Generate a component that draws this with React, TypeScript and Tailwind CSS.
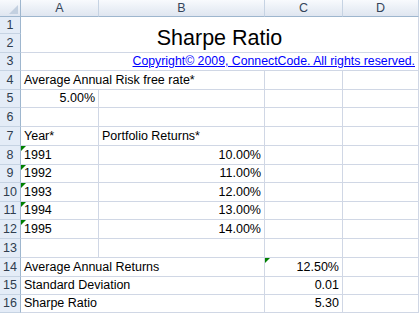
import React from 'react';

const FONT = { fontFamily: '"Liberation Sans", Arial, sans-serif' };

const ROWS = [17, 19, 18, 19, 18, 19, 19, 19, 18, 19, 18, 19, 19, 19, 18, 18];

const cell = 'border-r border-b border-[#d0d7e5] flex items-end px-[3px] pb-[1px] text-[12.5px] leading-[15px] text-black whitespace-nowrap overflow-hidden';

const Flag = () => (
  <span className="absolute left-0 top-0 w-0 h-0 border-t-[5px] border-r-[5px] border-t-[#008000] border-r-transparent" />
);

const RowHead = ({ n }: { n: number }) => (
  <div className="bg-[#e4ecf7] border-r border-[#9eb6ce] border-b border-b-[#c6d3e3] flex items-center justify-center text-[12.5px] leading-[15px] text-[#2f3d4f]">
    {n}
  </div>
);

const ColHead = ({ label }: { label: string }) => (
  <div className="bg-gradient-to-b from-[#f8fafd] to-[#dfe6f0] border-r border-r-[#c6d3e3] border-b border-b-[#9eb6ce] flex items-center justify-center text-[12.5px] text-[#34445a]">
    {label}
  </div>
);

const YEARS = [
  ['1991', '10.00%'],
  ['1992', '11.00%'],
  ['1993', '12.00%'],
  ['1994', '13.00%'],
  ['1995', '14.00%'],
];

export default function App() {
  return (
    <div className="w-[420px] h-[314px] bg-white overflow-hidden" style={FONT}>
      <div
        className="grid grid-cols-[21px_78px_166px_78px_76px]"
        style={{ gridTemplateRows: `17px ${ROWS.map(r => r + 'px').join(' ')}` }}
      >
        {/* corner */}
        <div className="relative bg-gradient-to-b from-[#f8fafd] to-[#dfe6f0] border-r border-b border-[#9eb6ce]">
          <svg className="absolute right-[2px] bottom-[2px]" width="9" height="9" viewBox="0 0 9 9">
            <polygon points="9,0 9,9 0,9" fill="#c3d0e0" />
          </svg>
        </div>
        <ColHead label="A" />
        <ColHead label="B" />
        <ColHead label="C" />
        <ColHead label="D" />

        {/* 1-2 title */}
        <RowHead n={1} />
        <div className="col-span-4 row-span-2 border-r border-b border-[#d0d7e5] flex items-end justify-center pb-[1px]">
          <span className="text-[21.5px] leading-[26px] text-black">Sharpe Ratio</span>
        </div>
        <RowHead n={2} />

        {/* 3 */}
        <RowHead n={3} />
        <div className={`${cell} col-span-4 justify-end`}>
          <span className="text-[#0000ff] underline text-[12.3px]">Copyright© 2009, ConnectCode. All rights reserved.</span>
        </div>

        {/* 4 */}
        <RowHead n={4} />
        <div className={`${cell} col-span-2`}>Average Annual Risk free rate*</div>
        <div className={cell} />
        <div className={cell} />

        {/* 5 */}
        <RowHead n={5} />
        <div className={`${cell} justify-end`}>5.00%</div>
        <div className={cell} />
        <div className={cell} />
        <div className={cell} />

        {/* 6 */}
        <RowHead n={6} />
        <div className={cell} />
        <div className={cell} />
        <div className={cell} />
        <div className={cell} />

        {/* 7 */}
        <RowHead n={7} />
        <div className={cell}>Year*</div>
        <div className={cell}>Portfolio Returns*</div>
        <div className={cell} />
        <div className={cell} />

        {YEARS.map(([y, v], i) => (
          <React.Fragment key={y}>
            <RowHead n={8 + i} />
            <div className={`${cell} relative`}>
              <Flag />
              {y}
            </div>
            <div className={`${cell} justify-end`}>{v}</div>
            <div className={cell} />
            <div className={cell} />
          </React.Fragment>
        ))}

        {/* 13 */}
        <RowHead n={13} />
        <div className={cell} />
        <div className={cell} />
        <div className={cell} />
        <div className={cell} />

        {/* 14 */}
        <RowHead n={14} />
        <div className={`${cell} col-span-2`}>Average Annual Returns</div>
        <div className={`${cell} relative justify-end`}>
          <Flag />
          12.50%
        </div>
        <div className={cell} />

        {/* 15 */}
        <RowHead n={15} />
        <div className={`${cell} col-span-2`}>Standard Deviation</div>
        <div className={`${cell} justify-end`}>0.01</div>
        <div className={cell} />

        {/* 16 */}
        <RowHead n={16} />
        <div className={`${cell} col-span-2`}>Sharpe Ratio</div>
        <div className={`${cell} justify-end`}>5.30</div>
        <div className={cell} />
      </div>
    </div>
  );
}
